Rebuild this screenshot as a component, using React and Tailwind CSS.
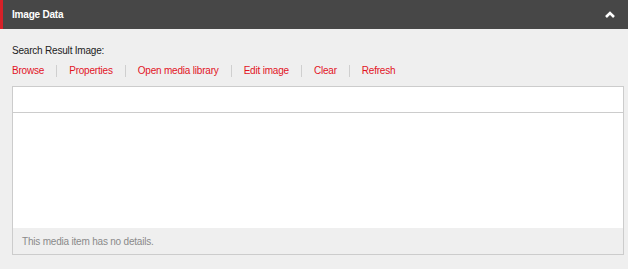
import React from "react";

const links = ["Browse", "Properties", "Open media library", "Edit image", "Clear", "Refresh"];

export default function App() {
  return (
    <div
      className="w-[628px] h-[269px] bg-[#efefef] text-[10px] tracking-[-0.2px]"
      style={{ fontFamily: '"Liberation Sans", Arial, sans-serif' }}
    >
      <div className="h-[29px] bg-[#474747] border-l-[3px] border-[#d62128] flex items-center justify-between pl-[9px] pr-[13px]">
        <span className="font-bold text-white">Image Data</span>
        <svg width="10" height="7" viewBox="0 0 10 7">
          <path d="M1 6 L5 2 L9 6" fill="none" stroke="#fff" strokeWidth="2.6" strokeLinejoin="miter" />
        </svg>
      </div>

      <div className="pl-[12px] pr-[4px]">
        <div className="mt-[15px] leading-[14px] text-[#222]">Search Result Image:</div>

        <div className="mt-[6px] flex items-center h-[14px] leading-[14px]">
          {links.map((l, i) => (
            <React.Fragment key={l}>
              {i > 0 ? <span className="mx-[12px] h-[12px] w-px bg-[#cfcfcf]" /> : null}
              <a className="text-[#e2141f] cursor-pointer">{l}</a>
            </React.Fragment>
          ))}
        </div>

        <div className="mt-[8px] w-[612px] border border-[#cccccc] bg-white">
          <div className="h-[26px] border-b border-[#cccccc]" />
          <div className="h-[115px]" />
          <div className="h-[26px] bg-[#efefef] flex items-center pl-[9px] text-[#8a8a8a]">
            This media item has no details.
          </div>
        </div>
      </div>
    </div>
  );
}
